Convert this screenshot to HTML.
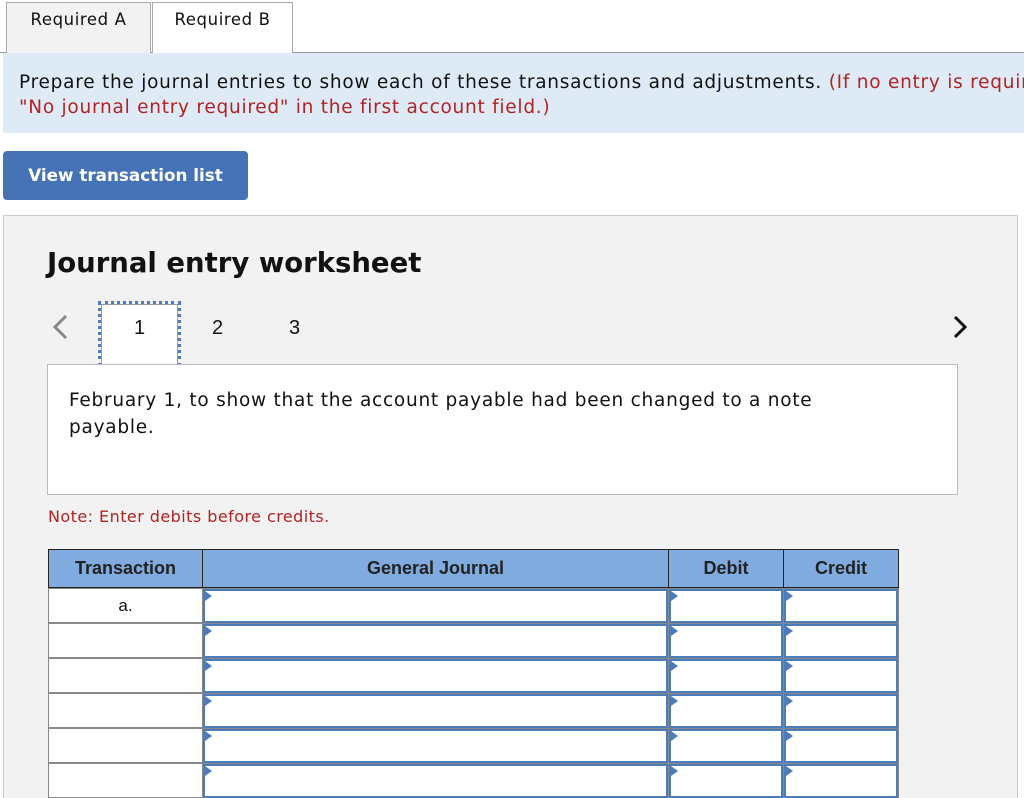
<!DOCTYPE html>
<html style="width:1024px;height:798px;overflow:hidden"><head><style>
*{margin:0;padding:0;box-sizing:border-box}
body{width:1024px;height:798px;overflow:hidden;background:#fff;font-family:"DejaVu Sans","Liberation Sans",sans-serif;position:relative;color:#111}
.a{position:absolute}
.tab{top:2px;height:51px;border:1px solid #aaa;border-bottom:none;font-size:16.5px;letter-spacing:0.6px;padding-top:7px;text-align:center}
.tbl{font-family:"Liberation Sans",sans-serif}
.h{top:549px;height:39px;background:#7fabde;border:1px solid #222;font-weight:bold;font-size:18px;text-align:center;padding-top:8px;color:#222;font-family:"Liberation Sans",sans-serif}
.c{background:#fff;border:2px solid #4d7cba}
.t{background:#fff;border:1px solid #888}
.tri{position:absolute;left:0;top:0;width:0;height:0;border-top:5px solid transparent;border-bottom:5px solid transparent;border-left:7px solid #4d7cba}
</style></head><body>
<div class="a" style="left:0;top:52px;width:1024px;height:1px;background:#999"></div>
<div class="a tab" style="left:6px;width:145px;background:#f2f2f2">Required A</div>
<div class="a tab" style="left:152px;width:141px;background:#fff;height:52px">Required B</div>
<div class="a" style="left:3px;top:53px;width:1021px;height:80px;background:#deebf7;overflow:hidden">
<div class="a" style="left:16px;top:17px;font-size:18.5px;letter-spacing:0.75px;line-height:25px;white-space:nowrap">Prepare the journal entries to show each of these transactions and adjustments. <span style="color:#b22222">(If no entry is required for a transaction/event, select<br>"No journal entry required" in the first account field.)</span></div>
</div>
<div class="a" style="left:3px;top:151px;width:245px;height:49px;background:#4673b5;border-radius:4px;color:#fff;font-weight:bold;font-size:16.8px;letter-spacing:0px;text-align:center;padding-top:14px">View transaction list</div>
<div class="a" style="left:3px;top:215px;width:1015px;height:583px;background:#f2f2f2;border:1px solid #ccc;border-bottom:none"></div>
<div class="a" style="left:47px;top:247px;font-size:27.5px;font-weight:bold">Journal entry worksheet</div>
<svg class="a" style="left:50px;top:313px" width="20" height="28"><path d="M16 3 L5 14 L16 25" stroke="#888" stroke-width="3" fill="none"/></svg>
<svg class="a" style="left:950px;top:315px" width="20" height="24"><path d="M5 2 L15 12 L5 22" stroke="#111" stroke-width="3" fill="none"/></svg>
<div class="a" style="left:98px;top:301px;width:83px;height:66px;border:3px dotted #4d7cba"></div>
<div class="a" style="left:101px;top:304px;width:77px;height:60px;background:#fff;border:1px solid #999;border-bottom:none"></div>
<div class="a" style="left:134px;top:317px;font-size:20px;font-family:'Liberation Sans',sans-serif">1</div>
<div class="a" style="left:212px;top:317px;font-size:20px;font-family:'Liberation Sans',sans-serif">2</div>
<div class="a" style="left:289px;top:317px;font-size:20px;font-family:'Liberation Sans',sans-serif">3</div>
<div class="a" style="left:47px;top:364px;width:911px;height:131px;background:#fff;border:1px solid #bbb"></div>
<div class="a" style="left:69px;top:387px;font-size:18.5px;letter-spacing:0.75px;line-height:27px">February 1, to show that the account payable had been changed to a note<br>payable.</div>
<div class="a" style="left:48px;top:507px;font-size:16px;letter-spacing:0.45px;color:#b22222">Note: Enter debits before credits.</div>
<div class="a h" style="left:48px;width:155px">Transaction</div>
<div class="a h" style="left:202px;width:467px">General Journal</div>
<div class="a h" style="left:668px;width:116px">Debit</div>
<div class="a h" style="left:783px;width:116px">Credit</div>
<div class="a" style="left:48px;top:588px;width:851px;height:210px;background:#888"></div>
<div class="a t tbl" style="left:48px;top:588px;width:155px;height:35px;font-size:17px;text-align:center;padding-top:7px">a.</div>
<div class="a t" style="left:48px;top:623px;width:155px;height:35px"></div>
<div class="a t" style="left:48px;top:658px;width:155px;height:35px"></div>
<div class="a t" style="left:48px;top:693px;width:155px;height:35px"></div>
<div class="a t" style="left:48px;top:728px;width:155px;height:35px"></div>
<div class="a t" style="left:48px;top:763px;width:155px;height:35px"></div>
<div id="rows"></div>
<script>
var h='';[588,623,658,693,728,763].forEach(function(y){[[203,465],[669,114],[784,114]].forEach(function(c){h+='<div class="a c" style="left:'+c[0]+'px;top:'+(y+1)+'px;width:'+c[1]+'px;height:34px"><div class="tri"></div></div>';});});
document.getElementById('rows').innerHTML=h;
</script>
</body></html>
